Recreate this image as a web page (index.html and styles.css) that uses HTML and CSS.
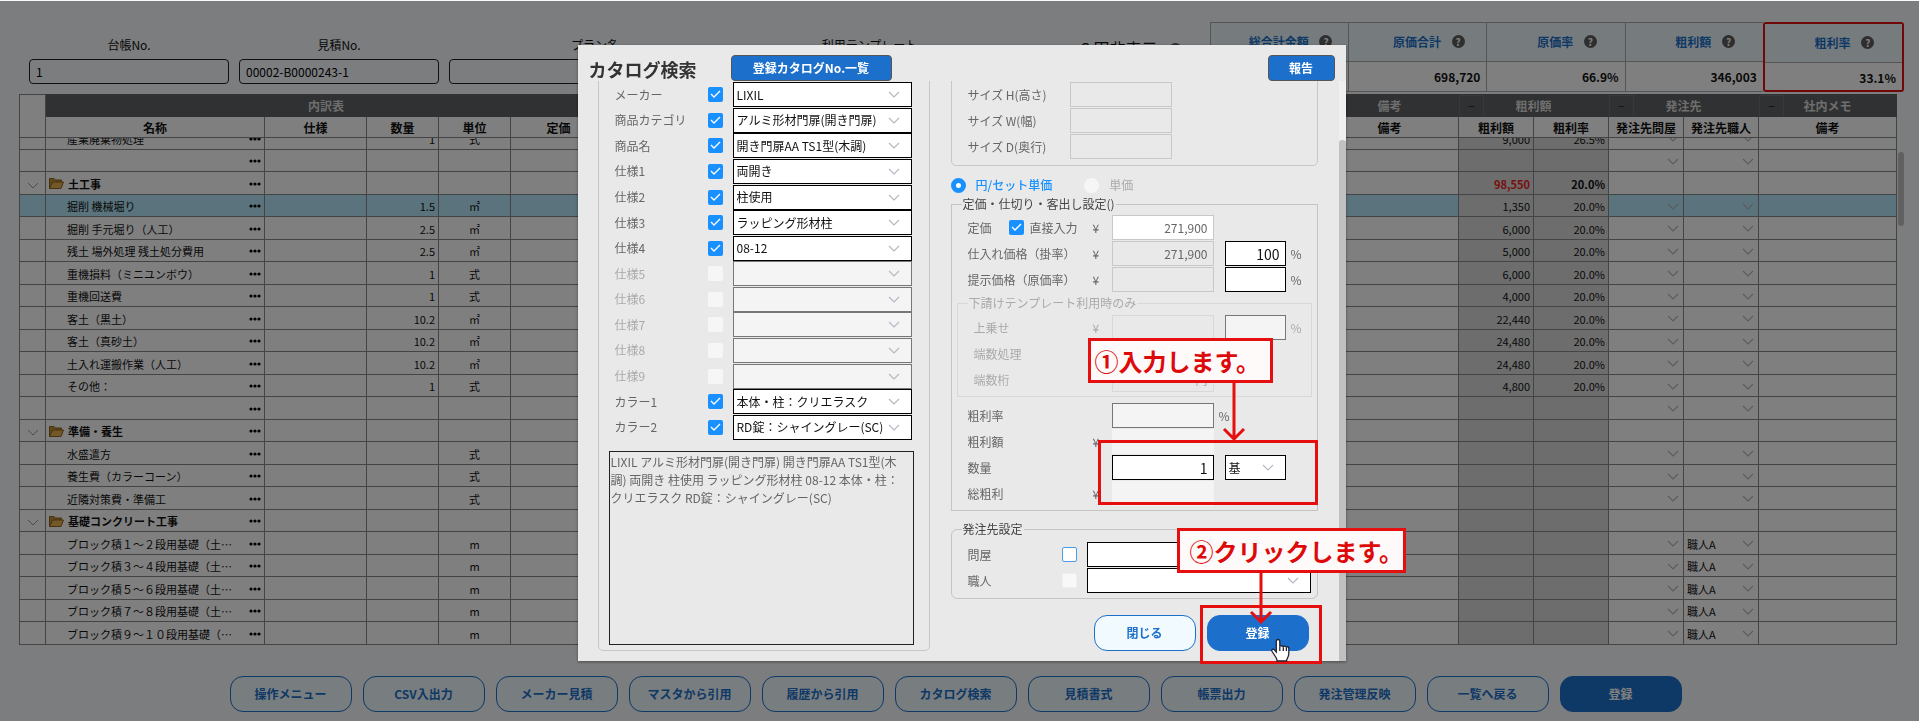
FILE: index.html
```
<!DOCTYPE html>
<html lang="ja">
<head>
    <meta charset="UTF-8">
    <title>カタログ検索</title>
    <link rel="stylesheet" href="styles.css">
</head>
<body>
<div id="page">
    <div id="top">
        <div class="field short">
            <label for="daicho">台帳No.</label>
            <input id="daicho" type="text" value="1">
        </div>
        <div class="field short">
            <label for="mitsumori">見積No.</label>
            <input id="mitsumori" type="text" value="00002-B0000243-1">
        </div>
        <div class="field">
            <label for="plan">プラン名</label>
            <input id="plan" type="text">
        </div>
        <div class="field template">
            <label for="template">利用テンプレート</label>
            <input id="template" type="text">
        </div>
        <div class="zero">０円非表示 <span class="help">?</span></div>
        <dl id="summary">
            <div><dt>総合計金額 <span class="help">?</span></dt><dd></dd></div>
            <div><dt>原価合計 <span class="help">?</span></dt><dd>698,720</dd></div>
            <div><dt>原価率 <span class="help">?</span></dt><dd>66.9%</dd></div>
            <div><dt>粗利額 <span class="help">?</span></dt><dd>346,003</dd></div>
            <div class="alert"><dt>粗利率 <span class="help">?</span></dt><dd>33.1%</dd></div>
        </dl>
    </div>

    <div id="sheet">
        <table class="grid">
            <colgroup>
                <col class="c-fold"><col class="c-name"><col class="c-spec"><col class="c-num"><col class="c-num"><col class="c-price">
                <col><col class="c-memo"><col class="c-rate"><col class="c-rate"><col class="c-rate"><col class="c-rate"><col class="c-memo">
            </colgroup>
            <thead>
                <tr class="group">
                    <td rowspan="2"></td>
                    <th colspan="5">内訳表</th>
                    <th></th>
                    <th>備考</th>
                    <th colspan="2"><button class="minus" type="button">−</button>粗利額</th>
                    <th colspan="2"><button class="minus" type="button">−</button>発注先</th>
                    <th><button class="minus" type="button">−</button>社内メモ</th>
                </tr>
                <tr class="names">
                    <th>名称</th>
                    <th>仕様</th>
                    <th>数量</th>
                    <th>単位</th>
                    <th>定価</th>
                    <th></th>
                    <th>備考</th>
                    <th>粗利額</th>
                    <th>粗利率</th>
                    <th>発注先問屋</th>
                    <th>発注先職人</th>
                    <th>備考</th>
                </tr>
            </thead>
        </table>
        <div class="scroll">
            <table class="grid">
                <colgroup>
                    <col class="c-fold"><col class="c-name"><col class="c-spec"><col class="c-num"><col class="c-num"><col class="c-price">
                    <col><col class="c-memo"><col class="c-rate"><col class="c-rate"><col class="c-rate"><col class="c-rate"><col class="c-memo">
                </colgroup>
                <tbody id="rows"></tbody>
            </table>
        </div>
        <span class="thumb"></span>
    </div>

    <div id="actions">
        <button type="button">操作メニュー</button>
        <button type="button">CSV入出力</button>
        <button type="button">メーカー見積</button>
        <button type="button">マスタから引用</button>
        <button type="button">履歴から引用</button>
        <button type="button">カタログ検索</button>
        <button type="button">見積書式</button>
        <button type="button">帳票出力</button>
        <button type="button">発注管理反映</button>
        <button type="button">一覧へ戻る</button>
        <button type="button" class="primary">登録</button>
    </div>
</div>

<div id="mask">
    <div id="stage">
        <div id="dialog">
            <div class="head">
                <h1>カタログ検索</h1>
                <button type="button" class="list">登録カタログNo.一覧</button>
                <button type="button" class="report">報告</button>
            </div>
            <div class="body">
                <div class="left panel">
                    <ul id="specs"></ul>
                    <textarea aria-label="商品説明" readonly>LIXIL アルミ形材門扉(開き門扉) 開き門扉AA TS1型(木調) 両開き 柱使用 ラッピング形材柱 08-12 本体・柱：クリエラスク RD錠：シャイングレー(SC)</textarea>
                </div>
                <div class="right">
                    <div class="panel sizes">
                        <div class="line"><label for="sizeH">サイズ H(高さ)</label><input id="sizeH" type="text" disabled></div>
                        <div class="line"><label for="sizeW">サイズ W(幅)</label><input id="sizeW" type="text" disabled></div>
                        <div class="line"><label for="sizeD">サイズ D(奥行)</label><input id="sizeD" type="text" disabled></div>
                    </div>
                    <div class="units">
                        <label class="on"><input type="radio" name="unit" checked>円/セット単価</label>
                        <label><input type="radio" name="unit" disabled>単価</label>
                    </div>
                    <fieldset class="price">
                        <legend>定価・仕切り・客出し設定()</legend>
                        <div class="line">
                            <label class="name" for="teika">定価</label>
                            <label class="direct"><input type="checkbox" checked>直接入力</label>
                            <span class="yen">¥</span><input id="teika" class="white" type="text" value="271,900">
                        </div>
                        <div class="line">
                            <label class="name" for="shiire">仕入れ価格（掛率）</label>
                            <span class="yen">¥</span><input id="shiire" type="text" value="271,900" disabled>
                            <input class="edit pct" type="text" value="100" aria-label="掛率"><span class="unit">%</span>
                        </div>
                        <div class="line">
                            <label class="name" for="teiji">提示価格（原価率）</label>
                            <span class="yen">¥</span><input id="teiji" type="text" disabled>
                            <input class="edit pct" type="text" aria-label="原価率"><span class="unit">%</span>
                        </div>
                        <fieldset class="sub">
                            <legend>下請けテンプレート利用時のみ</legend>
                            <div class="line">
                                <label class="name" for="uwanose">上乗せ</label>
                                <span class="yen">¥</span><input id="uwanose" type="text" disabled>
                                <input class="pct dim" type="text" aria-label="上乗せ率" disabled><span class="unit">%</span>
                            </div>
                            <div class="line">
                                <label class="name" for="hasu">端数処理</label>
                                <span class="yen"></span><input id="hasu" type="text" disabled>
                            </div>
                            <div class="line">
                                <label class="name" for="keta">端数桁</label>
                                <span class="yen"></span><input id="keta" type="text" value="円" disabled>
                            </div>
                        </fieldset>
                        <div class="line">
                            <label class="name" for="ritsu">粗利率</label>
                            <span class="yen"></span><input id="ritsu" class="dim" type="text" disabled><span class="unit">%</span>
                        </div>
                        <div class="line">
                            <label class="name" for="arari">粗利額</label>
                            <span class="yen">¥</span><input id="arari" class="plain" type="text" disabled>
                        </div>
                        <div class="line">
                            <label class="name" for="suryo">数量</label>
                            <span class="yen"></span><input id="suryo" class="edit" type="text" value="1">
                            <select class="box pct" aria-label="単位"><option>基</option></select>
                        </div>
                        <div class="line">
                            <label class="name" for="soarari">総粗利</label>
                            <span class="yen">¥</span><input id="soarari" class="plain" type="text" disabled>
                        </div>
                    </fieldset>
                    <fieldset class="order">
                        <legend>発注先設定</legend>
                        <div class="line">
                            <label for="useTonya">問屋</label><input id="useTonya" type="checkbox">
                            <select class="box" aria-label="問屋"><option></option></select>
                        </div>
                        <div class="line">
                            <label for="useShokunin">職人</label><input id="useShokunin" type="checkbox" class="faint">
                            <select class="box" aria-label="職人"><option></option></select>
                        </div>
                    </fieldset>
                    <div class="buttons">
                        <button type="button">閉じる</button>
                        <button type="button" class="primary">登録</button>
                    </div>
                </div>
            </div>
            <span class="track"><span></span></span>
        </div>

        <!-- 操作手順の注釈 -->
        <div class="frame f1"></div>
        <div class="frame f2"></div>
        <svg class="arrow a1" width="24" height="60" viewBox="0 0 24 60"><path d="M12 0V57M2 47L12 57L22 47"/></svg>
        <svg class="arrow a2" width="24" height="54" viewBox="0 0 24 54"><path d="M12 0V50M2 40L12 50L22 40"/></svg>
        <p class="note n1">①入力します。</p>
        <p class="note n2">②クリックします。</p>
        <svg class="hand" width="20" height="24" viewBox="0 0 20 24"><path d="M7 1.5C5.8 1.5 5.3 2.3 5.3 3.3V14L3.4 11.8C2.7 11 1.4 11 .9 11.9C.6 12.5.8 13 1.1 13.5L5 19.5C5.5 20.5 6 21 6 23H15.5C15.5 21 17.8 19 17.8 15.5V10C17.8 8.4 15.4 8.3 15.4 9.8C15.4 7.8 12.3 7.6 12.3 9.2C12.3 7.4 8.8 7.3 8.8 8.8V3.3C8.8 2.3 8.2 1.5 7 1.5Z"/><path d="M8.8 8.8V13M12.3 9.2V13M15.4 9.8V13"/></svg>
    </div>
</div>
<script src="script.js"></script>
</body>
</html>
```
FILE: styles.css
```
*{
    box-sizing: border-box;
    margin: 0;
    padding: 0;
}
body,input,select,textarea,button{
    font-family: "Noto Sans CJK JP", "Noto Sans", sans-serif;
    font-size: 12px;
    line-height: 18px;
}
body{
    background: #f7faff;
    color: #111;
}
ul{
    list-style: none;
}
select{
    appearance: none;
    border: 0;
    border-radius: 0;
    color: #111;
    background: url("data:image/svg+xml,%3Csvg xmlns='http://www.w3.org/2000/svg' width='12' height='7'%3E%3Cpath d='M1 1l5 5 5-5' fill='none' stroke='%23b4b8c0' stroke-width='1.2'/%3E%3C/svg%3E") no-repeat right 11px center;
}
input[type=checkbox],input[type=radio]{
    appearance: none;
    flex: none;
    width: 15px;
    height: 15px;
    border-radius: 2px;
    background: #f6f6f6 no-repeat center;
}
input[type=checkbox]:checked{
    background-color: #1890ff;
    background-image: url("data:image/svg+xml,%3Csvg xmlns='http://www.w3.org/2000/svg' width='11' height='9'%3E%3Cpath d='M1 4l3 3 6-6' fill='none' stroke='white' stroke-width='1.3'/%3E%3C/svg%3E");
}
input[type=radio]{
    border-radius: 50%;
}
input[type=radio]:checked{
    border: 5px solid #1890ff;
    background: #fff;
}

/* 見積画面 */
#page{
    padding: 22px 15px 9px 19px;
}
#top{
    display: flex;
    height: 72px;
    padding-left: 10px;
    gap: 10px;
}
.field{
    flex: 0 1 292px;
    padding-top: 14px;
    text-align: center;
}
.field.short{
    flex-basis: 200px;
}
.field.template{
    flex-basis: 237px;
}
.field label{
    display: block;
    height: 23px;
}
.field input{
    width: 100%;
    height: 25px;
    padding: 0 6px;
    border: 1px solid #222;
    border-radius: 4px;
    background: transparent;
}
.zero{
    flex: none;
    margin-left: auto;
    padding: 14px 18px 0 0;
    font-size: 16px;
    line-height: 24px;
    white-space: nowrap;
}
.help{
    display: inline-block;
    width: 13px;
    height: 13px;
    margin-left: 8px;
    border-radius: 50%;
    background: #5c5c5c;
    color: #fff;
    font-size: 10px;
    font-weight: bold;
    line-height: 13px;
    text-align: center;
    vertical-align: 1px;
}
#summary{
    display: flex;
    flex: 0 0 694px;
    height: 70px;
}
#summary > div{
    flex: 1;
    border: 1px solid #aaa;
    border-right: 0;
    background: #fff;
}
#summary > div.alert{
    border: 2px solid #e01010;
    border-radius: 3px;
}
#summary dt{
    height: 39px;
    padding: 10px 0 0 22px;
    border-bottom: 1px solid #aaa;
    background: #ecf8fb;
    color: #1c70cc;
    font-weight: bold;
    text-align: center;
}
#summary dd{
    padding: 6px 6px 0 0;
    font-weight: bold;
    text-align: right;
}
#sheet{
    position: relative;
    margin-right: 7px;
}
.grid{
    width: 100%;
    table-layout: fixed;
    border-collapse: collapse;
}
.c-fold{ width: 26px; }
.c-name{ width: 219px; }
.c-spec{ width: 102px; }
.c-num{ width: 72px; }
.c-price{ width: 96px; }
.c-memo{ width: 138px; }
.c-rate{ width: 75px; }
.grid th,.grid td{
    position: relative;
    border: 1px solid #888;
    background: #fff;
    overflow: hidden;
    white-space: nowrap;
}
.grid .group th{
    height: 22px;
    border-color: #606264;
    background: #606264;
    color: #ddd;
}
.grid .names th{
    height: 21px;
    padding-top: 2px;
}
.minus{
    position: absolute;
    left: 0;
    top: 0;
    width: 25px;
    height: 22px;
    border: 1px solid #707274;
    background: transparent;
    color: #222;
}
.scroll{
    overflow: hidden;
}
.scroll .grid{
    margin-top: -12px;
}
.scroll td{
    height: 23px;
    padding: 1px 3px 0;
    font-size: 11px;
    line-height: 16px;
}
.scroll tr:nth-child(even) td{
    height: 22px;
}
.scroll .num{
    text-align: right;
}
.scroll .mid{
    text-align: center;
}
.scroll .calc{
    background: #dadada;
    text-align: right;
}
.scroll .sel td:not(.calc){
    background: #b4e6f8;
}
.scroll .head .name,.scroll .head .calc{
    font-weight: bold;
}
.scroll .red{
    color: #f02020;
}
.name-cell{
    display: flex;
    align-items: center;
    gap: 4px;
    padding-left: 18px;
}
.head .name-cell{
    padding-left: 0;
}
.name-cell button{
    margin-left: auto;
    border: 0;
    background: none;
    line-height: 1;
    height: 4px;
    width: 12px;
    display: flex;
}
.grid td select{
    display: block;
    width: 100%;
    height: 18px;
    font-size: 11px;
    line-height: 16px;
    background-position: right 1px center;
}
.thumb{
    position: absolute;
    right: -7px;
    top: 58px;
    width: 6px;
    height: 74px;
    border-radius: 3px;
    background: #c1c1c1;
}
#actions{
    display: flex;
    justify-content: center;
    gap: 11px;
    margin-top: 31px;
    padding-right: 12px;
}
#actions button,.buttons button{
    width: 122px;
    height: 36px;
    border: 1px solid #1c70cc;
    border-radius: 13px;
    background: #f0faff;
    color: #1c70cc;
    font-weight: bold;
}
#actions .primary,.buttons .primary{
    background: #1c70cc;
    color: #fff;
}

/* ダイアログ */
#mask{
    position: fixed;
    top: 1px;
    left: 0;
    right: 0;
    bottom: 0;
    padding: 44px 0 0 4px;
    background: rgba(0,0,0,.5);
}
#stage{
    position: relative;
    width: 40%;
    min-width: 768px;
    margin: 0 auto;
}
#dialog{
    position: relative;
    padding-bottom: 10px;
    background: #e9e9e9;
    box-shadow: 0 1px 3px rgba(0,0,0,.4);
    color: #666;
}
#dialog .head{
    display: flex;
    height: 36px;
    padding: 10px 11px 0 11px;
}
#dialog h1{
    width: 142px;
    color: #333;
    font-size: 18px;
    line-height: 28px;
}
.head button.list,.head button.report{
    width: 161px;
    height: 26px;
    border: 1px solid #555;
    border-radius: 4px;
    background: #1c70cc;
    color: #fff;
    font-weight: bold;
}
.head button.report{
    width: 67px;
    margin-left: auto;
}
#dialog .body{
    display: flex;
    gap: 21px;
    padding: 0 28px 0 20px;
    overflow: hidden;
}
.panel{
    margin-top: -10px;
    border: 1px solid #c8c8c8;
    border-radius: 5px;
}
.left{
    flex: 1 0 332px;
    padding: 10px 15px 5px 10px;
}
.right{
    flex: 1 1 367px;
    min-width: 0;
}
#specs{
    display: grid;
    grid-template-rows: repeat(14, 1fr);
    height: 358px;
    padding: 0 2px 0 6px;
}
#specs li{
    display: flex;
    align-items: center;
}
#specs label{
    width: 93px;
}
.box{
    height: 25px;
    padding-left: 3px;
    border: 1px solid #000;
    background-color: #fff;
}
#specs .box{
    flex: 1;
    min-width: 0;
    margin-left: 10px;
}
#specs .off{
    color: #aaa;
}
.off .box{
    border-color: #777;
    background-color: #f4f4f4;
    opacity: 1;
}
.left textarea{
    display: block;
    width: 100%;
    height: 194px;
    margin-top: 11px;
    padding: 1px 8px 1px 1px;
    border: 1px solid #222;
    background: transparent;
    color: #666;
    resize: none;
}
.line{
    display: flex;
    align-items: center;
    height: 25px;
    margin-bottom: 1px;
}
.line input[type=text]{
    width: 102px;
    height: 25px;
    padding: 0 5px;
    border: 1px solid #c8c8c8;
    background: transparent;
    color: #666;
    text-align: right;
}
.sizes{
    padding: 10px 16px 5px;
}
.sizes label{
    width: 102px;
}
.units{
    display: flex;
    gap: 32px;
    height: 29px;
    padding-top: 6px;
    color: #aaa;
}
.units label{
    display: flex;
    align-items: center;
    gap: 10px;
    height: 26px;
}
.units .on{
    color: #1890ff;
    font-weight: 500;
}
fieldset{
    min-width: 0;
    border: 1px solid #c4c4c4;
    padding: 2px 16px 3px;
}
legend{
    margin-left: -6px;
    padding: 0 1px;
    color: #444;
}
.name{
    flex: 1 0 0;
}
.price .line{
    padding-right: 87px;
}
.price .line .name{
    white-space: nowrap;
}
.direct{
    display: flex;
    align-items: center;
    gap: 5px;
    margin-right: 12px;
}
.yen{
    width: 22px;
    padding-left: 3px;
}
.price .line .pct{
    flex: none;
    width: 61px;
    margin: 0 -72px 0 11px;
}
.price .pct + .unit{
    margin: 0 -94px 0 77px;
}
.unit{
    width: 17px;
    margin-right: -22px;
    margin-left: 5px;
}
.line .white[type=text]{
    background: #fff;
}
.line .edit[type=text]{
    border-color: #000;
    background: #fff;
    color: #111;
    font-size: 14px;
}
.line .dim[type=text]{
    border-color: #777;
    background: #f4f4f4;
}
.line .plain[type=text]{
    border-color: #f4f4f4;
    background: #f4f4f4;
}
.sub{
    margin: 2px -11px 6px;
    padding: 3px 16px 3px;
    border-color: #d8d8d8;
    color: #aaa;
}
.sub legend{
    margin-left: -6px;
    color: #aaa;
}
.sub .line input[type=text]{
    color: #aaa;
}
.sub .line input:not(.dim){
    border-color: #d8d8d8;
}
.sub .line{
    padding-right: 81px;
}
.order{
    margin-top: 9px;
    padding: 4px 6px 4px 16px;
    border-radius: 6px;
}
.order label{
    width: 94px;
}
.order .line input[type=checkbox]{
    border: 1px solid #4a9be8;
    background: #fff;
}
.order .line .faint[type=checkbox]{
    border-color: #f0f0f0;
    background: #f8f8f8;
}
.order .box{
    flex: 1;
    margin-left: 10px;
}
.buttons{
    display: flex;
    justify-content: flex-end;
    gap: 11px;
    margin-top: 16px;
    padding-right: 9px;
}
.buttons button{
    width: 102px;
}
.track{
    position: absolute;
    top: 36px;
    right: 0;
    bottom: 0;
    width: 7px;
    padding-top: 59px;
    background: #f0f0f0;
}
.track span{
    display: block;
    height: 100%;
    border-radius: 3px 3px 0 0;
    background: #c0c0c0;
}

/* 注釈 */
.frame,.note,.arrow,.hand{
    position: absolute;
}
.frame,.note{
    border: 3px solid #e60f0f;
}
.note{
    height: 45px;
    padding-left: 4px;
    background: #fffafa;
    color: #dc0a0a;
    font-size: 24px;
    font-weight: bold;
    line-height: 39px;
    white-space: nowrap;
}
.n1{
    left: 510px;
    top: 293px;
    width: 185px;
}
.n2{
    left: 599px;
    top: 483px;
    width: 229px;
    padding-left: 10px;
}
.f1{
    left: 520px;
    top: 395px;
    width: 220px;
    height: 65px;
}
.f2{
    left: 622px;
    top: 560px;
    width: 122px;
    height: 59px;
}
.arrow path{
    fill: none;
    stroke: #e60f0f;
    stroke-width: 3;
}
.a1{
    left: 644px;
    top: 337px;
}
.a2{
    left: 671px;
    top: 527px;
}
.hand{
    left: 693px;
    top: 593px;
}
.hand path{
    fill: #fff;
    stroke: #223;
    stroke-width: 1.3;
}
```
FILE: script.js
```
var rows = [
    ['', '産業廃棄物処理', '1', '式', '9,000', '26.5%', ''],
    ['', '', '', '', '', '', ''],
    ['head', '土工事', '', '', '98,550', '20.0%', ''],
    ['sel', '掘削 機械堀り', '1.5', '㎡', '1,350', '20.0%', ''],
    ['', '掘削 手元堀り（人工）', '2.5', '㎡', '6,000', '20.0%', ''],
    ['', '残土 場外処理 残土処分費用', '2.5', '㎡', '5,000', '20.0%', ''],
    ['', '重機損料（ミニユンボウ）', '1', '式', '6,000', '20.0%', ''],
    ['', '重機回送費', '1', '式', '4,000', '20.0%', ''],
    ['', '客土（黒土）', '10.2', '㎡', '22,440', '20.0%', ''],
    ['', '客土（真砂土）', '10.2', '㎡', '24,480', '20.0%', ''],
    ['', '土入れ運搬作業（人工）', '10.2', '㎡', '24,480', '20.0%', ''],
    ['', 'その他：', '1', '式', '4,800', '20.0%', ''],
    ['', '', '', '', '', '', ''],
    ['head', '準備・養生', '', '', '', '', ''],
    ['', '水盛遣方', '', '式', '', '', ''],
    ['', '養生費（カラーコーン）', '', '式', '', '', ''],
    ['', '近隣対策費・準備工', '', '式', '', '', ''],
    ['head', '基礎コンクリート工事', '', '', '', '', ''],
    ['', 'ブロック積１～２段用基礎（土…', '', 'm', '', '', '職人A'],
    ['', 'ブロック積３～４段用基礎（土…', '', 'm', '', '', '職人A'],
    ['', 'ブロック積５～６段用基礎（土…', '', 'm', '', '', '職人A'],
    ['', 'ブロック積７～８段用基礎（土…', '', 'm', '', '', '職人A'],
    ['', 'ブロック積９～１０段用基礎（…', '', 'm', '', '', '職人A']
];
var fold = '<svg width="12" height="7" viewBox="0 0 12 7"><path d="M1 1l5 5 5-5" fill="none" stroke="#999"/></svg>';
var folder = '<svg width="15" height="11" viewBox="0 0 15 11"><path d="M.5 10.5V.5H5L6 2H12.500V4" fill="#c89030" stroke="#8a6420"/><path d="M.5 10.500L3.500 4H14.500L12 10.500Z" fill="#e8b050" stroke="#8a6420"/></svg>';
var dots = '<button type="button" aria-label="メニュー"><svg width="12" height="4"><circle cx="2" cy="2" r="1.600"/><circle cx="6" cy="2" r="1.600"/><circle cx="10" cy="2" r="1.600"/></svg></button>';

function pick(head, value, label) {
    return head ? '' : '<select aria-label="' + label + '"><option>' + value + '</option></select>';
}

var html = '';
for (var i = 0; i < rows.length; i++) {
    var r = rows[i];
    var head = r[0] == 'head';
    html += '<tr class="' + r[0] + '">' +
        '<td class="mid">' + (head ? fold : '') + '</td>' +
        '<td class="name"><div class="name-cell">' + (head ? folder : '') + '<span>' + r[1] + '</span>' + dots + '</div></td>' +
        '<td></td>' +
        '<td class="num">' + r[2] + '</td>' +
        '<td class="mid">' + r[3] + '</td>' +
        '<td></td><td></td><td></td>' +
        '<td class="calc' + (head ? ' red' : '') + '">' + r[4] + '</td>' +
        '<td class="calc">' + r[5] + '</td>' +
        '<td>' + pick(head, '', '発注先問屋') + '</td>' +
        '<td>' + pick(head, r[6], '発注先職人') + '</td>' +
        '<td></td></tr>';
}
document.getElementById('rows').innerHTML = html;

var specs = [
    ['メーカー', 'LIXIL'],
    ['商品カテゴリ', 'アルミ形材門扉(開き門扉)'],
    ['商品名', '開き門扉AA TS1型(木調)'],
    ['仕様1', '両開き'],
    ['仕様2', '柱使用'],
    ['仕様3', 'ラッピング形材柱'],
    ['仕様4', '08-12'],
    ['仕様5', ''],
    ['仕様6', ''],
    ['仕様7', ''],
    ['仕様8', ''],
    ['仕様9', ''],
    ['カラー1', '本体・柱：クリエラスク'],
    ['カラー2', 'RD錠：シャイングレー(SC)']
];
html = '';
for (i = 0; i < specs.length; i++) {
    var on = specs[i][1] != '';
    html += '<li class="' + (on ? '' : 'off') + '">' +
        '<label for="spec' + i + '">' + specs[i][0] + '</label>' +
        '<input id="spec' + i + '" type="checkbox" ' + (on ? 'checked' : 'disabled') + '>' +
        '<select class="box" aria-label="' + specs[i][0] + '" ' + (on ? '' : 'disabled') + '><option>' + specs[i][1] + '</option></select></li>';
}
document.getElementById('specs').innerHTML = html;
```
